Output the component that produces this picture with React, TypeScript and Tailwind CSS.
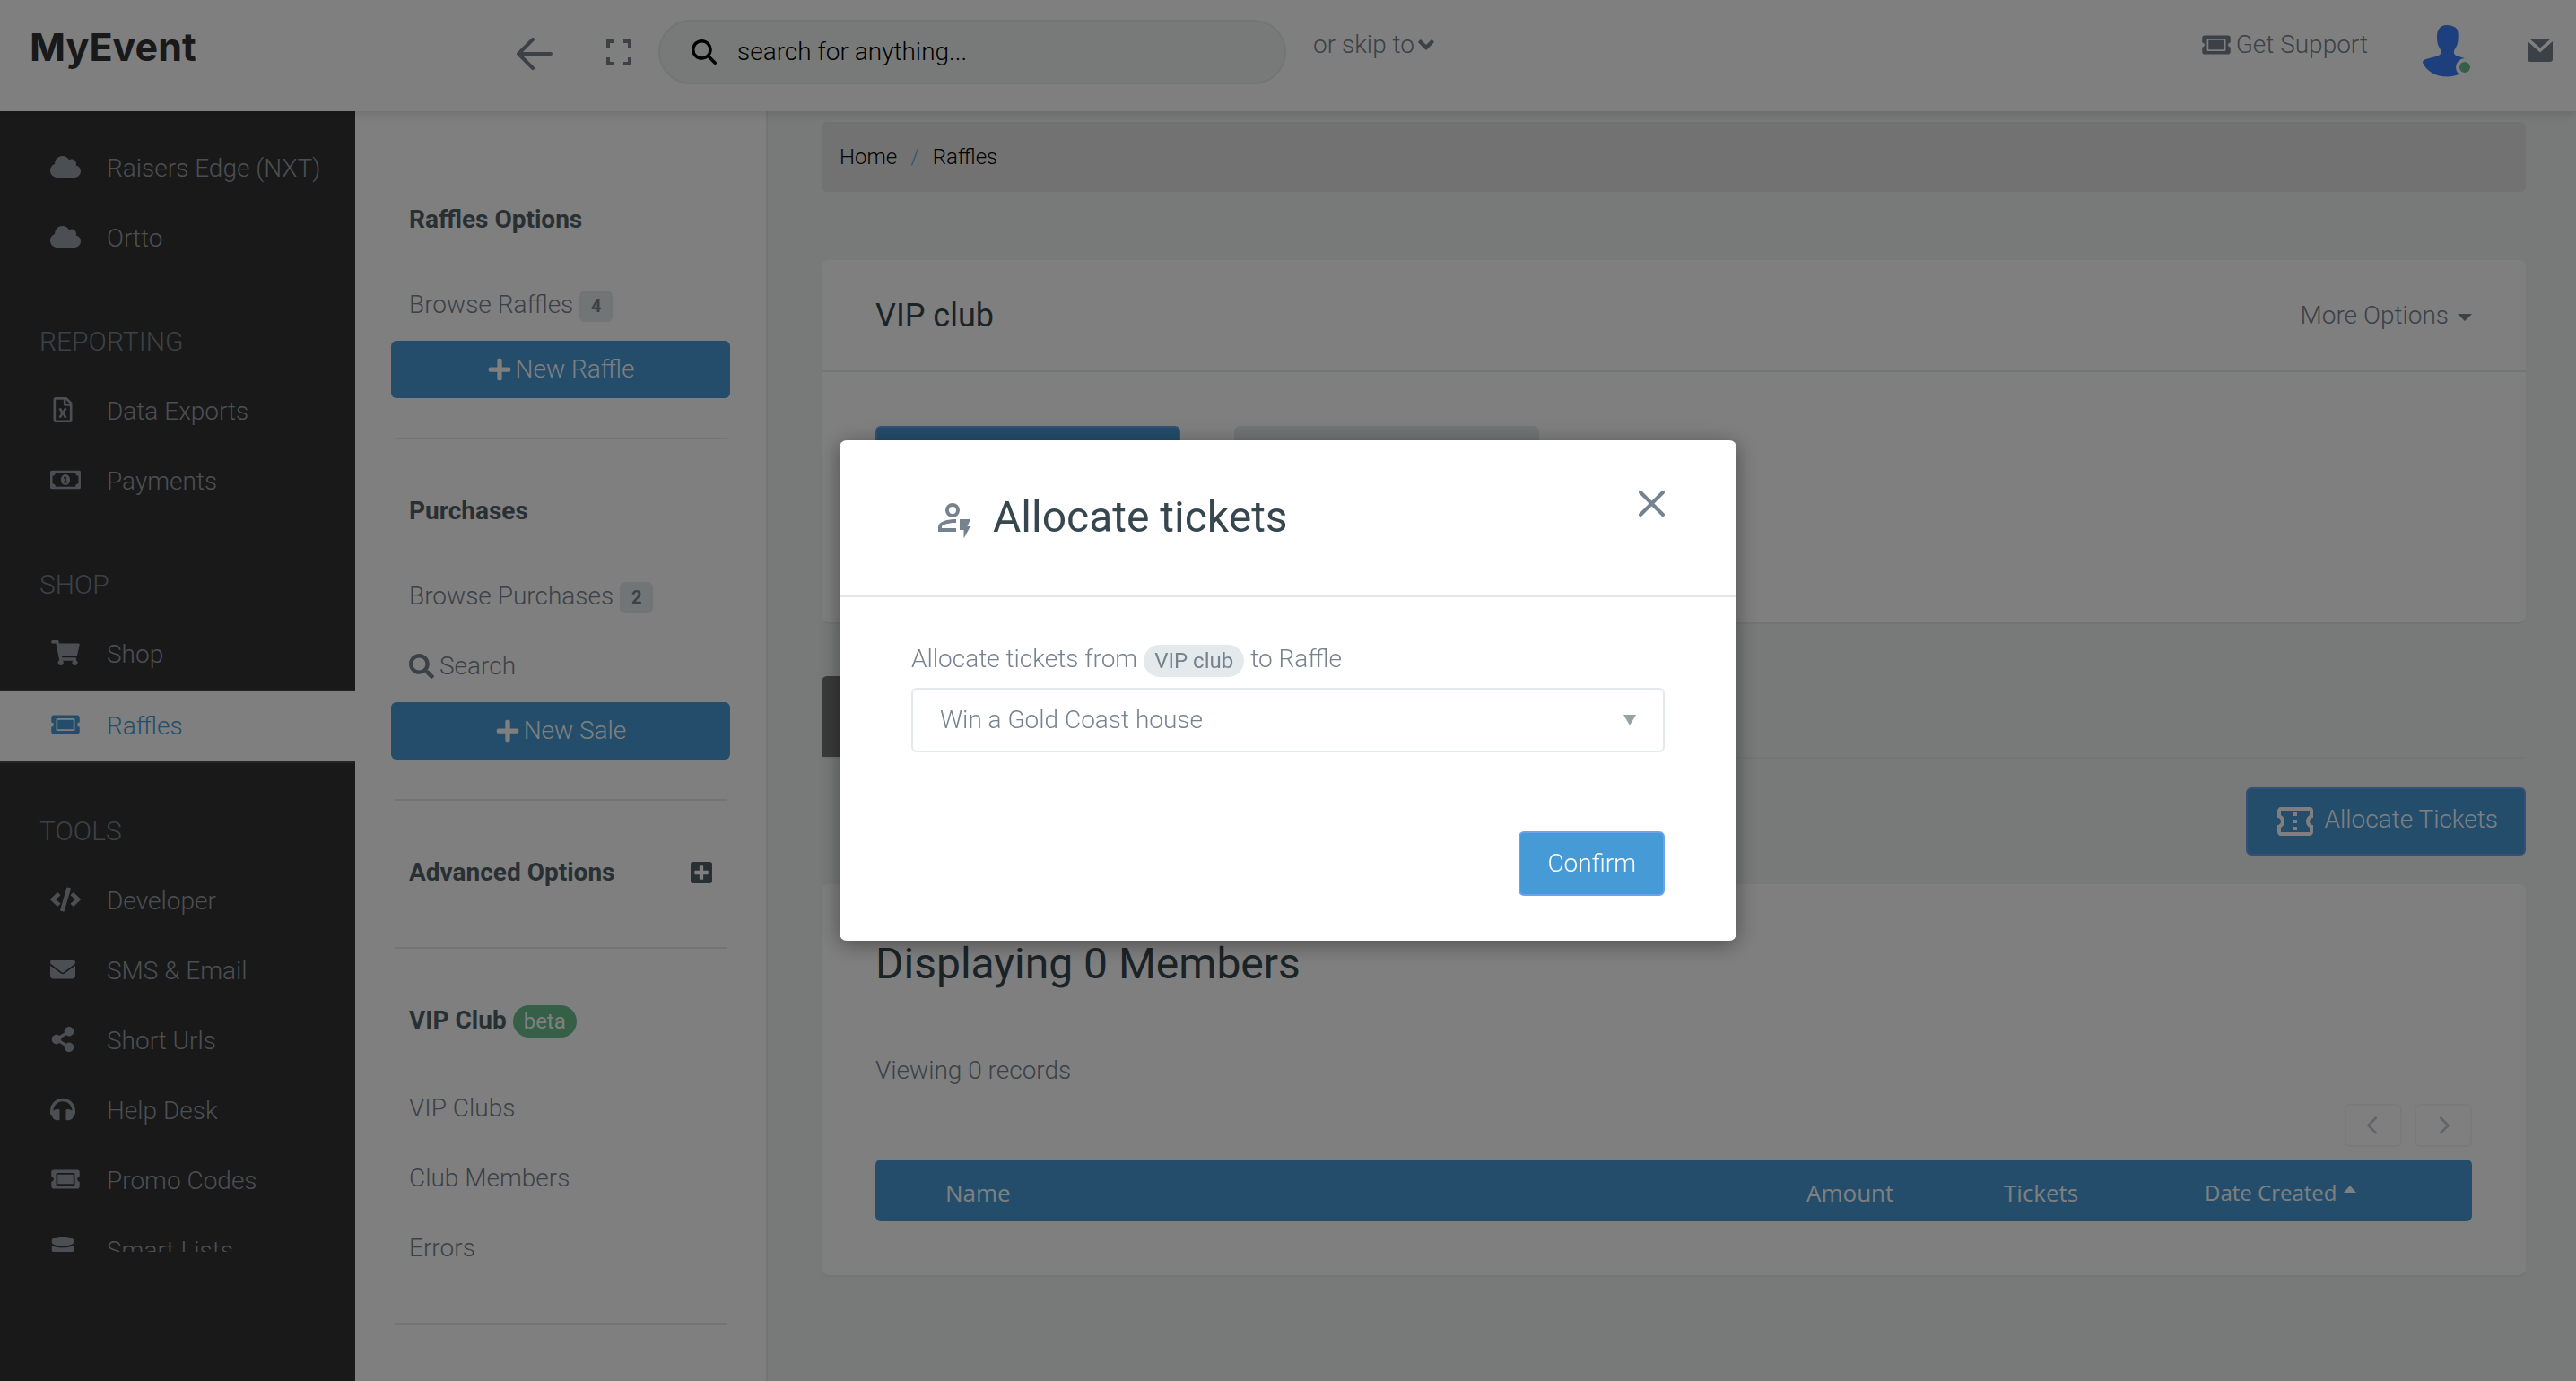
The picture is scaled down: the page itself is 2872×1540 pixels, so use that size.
import type { ReactNode } from "react";
import type { IconType } from "react-icons";
import {
  FaAngleDown,
  FaCloud,
  FaCode,
  FaDatabase,
  FaHeadphones,
  FaPlus,
  FaPlusSquare,
  FaRegFileExcel,
  FaRegMoneyBillAlt,
  FaSearch,
  FaShareAlt,
  FaShoppingCart,
  FaTicketAlt,
} from "react-icons/fa";
import { FaChevronLeft, FaChevronRight, FaEnvelope, FaMagnifyingGlass } from "react-icons/fa6";
import { MdOutlineConfirmationNumber } from "react-icons/md";

type NavItem = { label: string; icon: IconType; wide?: boolean; active?: boolean };
type NavGroup = { title?: string; items: NavItem[] };

const navGroups: NavGroup[] = [
  {
    items: [
      { label: "Raisers Edge (NXT)", icon: FaCloud, wide: true },
      { label: "Ortto", icon: FaCloud, wide: true },
    ],
  },
  {
    title: "REPORTING",
    items: [
      { label: "Data Exports", icon: FaRegFileExcel },
      { label: "Payments", icon: FaRegMoneyBillAlt, wide: true },
    ],
  },
  {
    title: "SHOP",
    items: [
      { label: "Shop", icon: FaShoppingCart, wide: true },
      { label: "Raffles", icon: FaTicketAlt, wide: true, active: true },
    ],
  },
  {
    title: "TOOLS",
    items: [
      { label: "Developer", icon: FaCode, wide: true },
      { label: "SMS & Email", icon: FaEnvelope },
      { label: "Short Urls", icon: FaShareAlt },
      { label: "Help Desk", icon: FaHeadphones },
      { label: "Promo Codes", icon: FaTicketAlt, wide: true },
      { label: "Smart Lists", icon: FaDatabase },
    ],
  },
];

function BackArrow() {
  return (
    <svg width="40" height="36" viewBox="0 0 40 36" fill="none" stroke="currentColor" strokeWidth="4" strokeLinecap="round" strokeLinejoin="round">
      <path d="M38 18H2M18 2L2 18L18 34" />
    </svg>
  );
}

function FullscreenIcon() {
  return (
    <svg width="28" height="29" viewBox="0 0 28 29" fill="none" stroke="currentColor" strokeWidth="4">
      <path d="M2 9V2H9M19 2H26V9M26 20V27H19M9 27H2V20" />
    </svg>
  );
}

function Avatar() {
  return (
    <svg width="60" height="60" viewBox="0 0 60 60" aria-hidden="true">
      <path
        d="M28 2C32 2 35 3 38 5C41 8 41 13 40.500 19C40 25 37 28 36 31C35.500 34 37 36 41 37L48 39C52 40 55 42 55 45C50 54 40 59.500 28 59.500C16 59.500 6 54 1 44C1 41 4 40 8 39L16 37C20 36 22 34 21.500 31C20 27 17 24 17 17C16.500 8 20 2 28 2Z"
        fill="#3b7ffa"
      />
      <circle cx="48" cy="49" r="10" fill="#ffffff" />
      <circle cx="48" cy="49" r="6" fill="#6bbf8c" />
    </svg>
  );
}

function MailIcon() {
  return (
    <svg width="28" height="26" viewBox="0 0 28 26" fill="currentColor">
      <path d="M2 0H26L14 10.500Z" />
      <path d="M0 3L14 15.500L28 3V23Q28 26 25 26H3Q0 26 0 23Z" />
    </svg>
  );
}

function UserBoltIcon() {
  return (
    <svg width="38" height="40" viewBox="0 0 38 40" fill="currentColor">
      <circle cx="17" cy="8" r="6" fill="none" stroke="currentColor" strokeWidth="4" />
      <path d="M1 32V26.500C1 20.500 12 18 21 18V22C14 22 5 24 5 26.500V28H21V32Z" />
      <path d="M25 18H37L33.500 26H37L29.500 39.500V30H25Z" />
    </svg>
  );
}

function CloseIcon() {
  return (
    <svg width="29" height="29" viewBox="0 0 29 29" fill="none" stroke="currentColor" strokeWidth="4" strokeLinecap="round">
      <path d="M2 2L27 27M27 2L2 27" />
    </svg>
  );
}

function Header() {
  return (
    <header className="relative z-10 h-[124px] bg-white pb-2 shadow-[0_4px_10px_rgba(0,0,0,0.12)]">
      <div className="flex h-full items-center">
        <a href="#" className="w-[576px] pb-3 pl-[33px] font-['Inter',sans-serif] text-[43px] leading-[48px] font-bold text-[#333333]">
          MyEvent
        </a>
        <button type="button" aria-label="Back" className="pt-1">
          <BackArrow />
        </button>
        <button type="button" aria-label="Full screen" className="ml-[60px]">
          <FullscreenIcon />
        </button>
        <label className="ml-[30px] flex h-[72px] w-[700px] items-center rounded-full border-2 border-[#e4eaec] bg-[#f1f4f3] pl-[35px] text-black">
          <FaMagnifyingGlass size={28} />
          <input
            type="text"
            aria-label="Search"
            placeholder="search for anything..."
            className="ml-[23px] min-w-0 flex-1 bg-transparent outline-none placeholder:text-black placeholder:opacity-100"
          />
        </label>
        <button type="button" className="ml-[30px] flex items-center gap-1 pb-4">
          or skip to <FaAngleDown className="h-7 w-[18px]" />
        </button>
        <a href="#" className="ml-auto flex items-center gap-1.5 pb-4">
          <FaTicketAlt className="h-7 w-8" />
          Get Support
        </a>
        <button type="button" aria-label="Account" className="ml-[60px] pb-1">
          <Avatar />
        </button>
        <button type="button" aria-label="Messages" className="mr-[26px] ml-[58px] pb-1">
          <MailIcon />
        </button>
      </div>
    </header>
  );
}

function Sidebar() {
  return (
    <aside className="flex w-[396px] shrink-0 flex-col bg-[#333333] pb-36 text-[#979fa6]">
      <nav className="min-h-0 flex-1 overflow-hidden pt-[25px]">
        {navGroups.map((group, i) => (
          <section key={i} className="mb-[37px]">
            {group.title && (
              <h3 className="pl-11 text-[30px] leading-[78px] text-[#76838f]">{group.title}</h3>
            )}
            <ul>
              {group.items.map(({ label, icon: Icon, wide, active }) => (
                <li key={label}>
                  <a
                    href="#"
                    className={
                      active
                        ? "flex h-[82px] items-center border-y-2 border-[#4a4a4a] bg-white pl-14 text-[#469bd6]"
                        : "flex h-[78px] items-center pl-14"
                    }
                  >
                    <span className="w-[63px] pb-[5px]">
                      <Icon className={wide ? "h-7 w-[34px]" : "h-7 w-7"} />
                    </span>
                    {label}
                  </a>
                </li>
              ))}
            </ul>
          </section>
        ))}
      </nav>
    </aside>
  );
}

function PanelHeading({ children }: { children: ReactNode }) {
  return <h2 className="flex h-[78px] items-center px-5 font-bold text-[#526069]">{children}</h2>;
}

function PanelLink({ children }: { children: ReactNode }) {
  return (
    <a href="#" className="flex h-[78px] items-center px-5">
      {children}
    </a>
  );
}

function CountBadge({ value }: { value: number }) {
  return (
    <span className="mt-0.5 ml-[7px] flex h-[35px] w-[37px] items-center justify-center rounded-md bg-[#e4eaec] text-[20px] font-bold text-[#76838f]">
      {value}
    </span>
  );
}

function PanelButton({ children }: { children: ReactNode }) {
  return (
    <button type="button" className="my-px flex h-16 w-full items-center justify-center gap-1 rounded-md bg-[#469bd6] text-white">
      <FaPlus size={28} />
      {children}
    </button>
  );
}

function PanelRule() {
  return <hr className="mx-1 mt-11 mb-[41px] border-0 border-t-2 border-[#e4eaec]" />;
}

function OptionsPanel() {
  return (
    <aside className="w-[460px] shrink-0 overflow-hidden border-r-2 border-[#e4eaec] bg-white pt-[82px] pr-10 pl-10">
      <PanelHeading>Raffles Options</PanelHeading>
      <div className="mt-[17px]">
        <PanelLink>
          Browse Raffles <CountBadge value={4} />
        </PanelLink>
        <PanelButton>New Raffle</PanelButton>
      </div>
      <PanelRule />
      <PanelHeading>Purchases</PanelHeading>
      <div className="mt-[17px]">
        <PanelLink>
          Browse Purchases <CountBadge value={2} />
        </PanelLink>
        <PanelLink>
          <FaSearch size={28} className="mr-1.5" />
          Search
        </PanelLink>
        <PanelButton>New Sale</PanelButton>
      </div>
      <PanelRule />
      <PanelHeading>
        Advanced Options
        <button type="button" aria-label="Expand advanced options" className="ml-auto">
          <FaPlusSquare className="h-7 w-6" />
        </button>
      </PanelHeading>
      <PanelRule />
      <PanelHeading>
        VIP Club
        <span className="mt-0.5 ml-[7px] rounded-full bg-[#6bbf8c] px-3 text-[24px] leading-9 font-normal text-white">beta</span>
      </PanelHeading>
      <div className="mt-5">
        <PanelLink>VIP Clubs</PanelLink>
        <PanelLink>Club Members</PanelLink>
        <PanelLink>Errors</PanelLink>
      </div>
      <PanelRule />
    </aside>
  );
}

function MembersTable() {
  return (
    <table className="mt-[14px] w-full table-fixed overflow-hidden rounded-md bg-[#469bd6] font-['Open_Sans',sans-serif] text-[26px] text-white">
      <thead>
        <tr className="h-[69px] text-left">
          <th scope="col" className="pt-1 pl-[78px] font-normal">
            Name
          </th>
          <th scope="col" className="w-[220px] pt-1 font-normal">
            Amount
          </th>
          <th scope="col" className="w-[224px] pt-1 font-normal">
            Tickets
          </th>
          <th scope="col" aria-sort="ascending" className="w-[298px] pt-1 font-normal">
            <button type="button" className="flex items-center gap-2 text-[24px]">
              Date Created
              <svg width="14" height="8" viewBox="0 0 14 8" fill="currentColor" className="mb-2">
                <path d="M7 0L14 8H0Z" />
              </svg>
            </button>
          </th>
        </tr>
      </thead>
    </table>
  );
}

function Main() {
  return (
    <main className="min-w-0 flex-1 overflow-hidden bg-[#f1f4f3] pt-3 pr-14 pl-[60px]">
      <nav aria-label="Breadcrumb" className="flex h-[78px] items-center gap-[15px] rounded-md bg-[#e4e4e4] pl-5 text-[24px] text-black">
        <a href="#">Home</a>
        <span className="text-[#62a8ea]">/</span>
        <a href="#">Raffles</a>
      </nav>

      <section className="mt-[76px] rounded-lg bg-white shadow-[0_2px_2px_rgba(0,0,0,0.05)]">
        <div className="flex h-[125px] items-center justify-between border-b-2 border-[#e4eaec] px-[60px]">
          <h1 className="text-[36px] font-normal text-[#37474f]">VIP club</h1>
          <button type="button" className="flex items-center gap-2.5">
            More Options
            <svg width="16" height="8" viewBox="0 0 16 8" fill="currentColor" className="mt-1">
              <path d="M0 0H16L8 8Z" />
            </svg>
          </button>
        </div>
        <div className="flex gap-[60px] px-[60px] pt-[60px] pb-[147px]">
          <button type="button" aria-label="Members" className="h-[72px] w-[340px] rounded-md border-2 border-[#6f9ff0] bg-[#469bd6]" />
          <button type="button" aria-label="Settings" className="h-[72px] w-[340px] rounded-md bg-[#e4eaec]" />
        </div>
      </section>

      <div role="tablist" className="mt-[60px] flex h-[92px] border-b-2 border-[#e8ebec]">
        <button type="button" role="tab" aria-selected="true" aria-label="Members" className="w-[240px] rounded-t-md bg-[#757575]" />
      </div>

      <div className="mt-8 flex justify-end">
        <button type="button" className="flex h-[76px] items-center gap-2 rounded-md border-2 border-[#6f9ff0] bg-[#469bd6] px-[29px] text-white">
          <MdOutlineConfirmationNumber size={48} />
          <span className="pb-[5px]">Allocate Tickets</span>
        </button>
      </div>

      <section className="mt-8 rounded-lg bg-white px-[60px] pt-[57px] pb-[60px] shadow-[0_2px_2px_rgba(0,0,0,0.05)]">
        <h2 className="text-[48px] leading-[64px] font-normal text-[#37474f]">Displaying 0 Members</h2>
        <p className="mt-[67px] leading-10">Viewing 0 records</p>
        <div className="mt-[17px] flex justify-end gap-[14px] text-[#c4cbd2]">
          <button type="button" aria-label="Previous page" disabled className="flex h-12 w-16 items-center justify-center rounded-md border-2 border-[#f3f5f6]">
            <FaChevronLeft size={22} />
          </button>
          <button type="button" aria-label="Next page" disabled className="flex h-12 w-16 items-center justify-center rounded-md border-2 border-[#f3f5f6]">
            <FaChevronRight size={22} />
          </button>
        </div>
        <MembersTable />
      </section>
    </main>
  );
}

function AllocateDialog() {
  return (
    <div className="fixed inset-0 z-20 flex items-center justify-center bg-black/50">
      <div role="dialog" aria-modal="true" aria-labelledby="allocate-title" className="w-[1000px] rounded-lg bg-white shadow-[0_4px_24px_rgba(0,0,0,0.4)]">
        <div className="flex h-[175px] items-center border-b-3 border-[#e5e5e5] pr-20 pl-[109px]">
          <span className="pt-2">
            <UserBoltIcon />
          </span>
          <h2 id="allocate-title" className="ml-6 text-[48px] font-normal text-[#37474f]">
            Allocate tickets
          </h2>
          <button type="button" aria-label="Close" className="mt-14 ml-auto self-start">
            <CloseIcon />
          </button>
        </div>
        <form className="px-20 pt-[49px] pb-[50px]" onSubmit={(e) => e.preventDefault()}>
          <label htmlFor="raffle" className="flex h-10 items-center gap-[7px]">
            Allocate tickets from
            <span className="mt-1 rounded-full bg-[#e4eaec] px-3 text-[24px] leading-9 font-normal">VIP club</span>
            to Raffle
          </label>
          <div className="relative mt-3">
            <select id="raffle" className="h-[72px] w-full appearance-none rounded-md border-2 border-[#e4eaec] bg-white pl-[30px]">
              <option>Win a Gold Coast house</option>
            </select>
            <svg width="14" height="12" viewBox="0 0 14 12" className="pointer-events-none absolute top-[30px] right-8" fill="#98a1a6">
              <path d="M0 0H14L7 12Z" />
            </svg>
          </div>
          <div className="mt-[88px] flex justify-end">
            <button type="submit" className="h-[72px] rounded-md border-2 border-[#6f9ff0] bg-[#469bd6] px-[30px] text-white">
              Confirm
            </button>
          </div>
        </form>
      </div>
    </div>
  );
}

export default function App() {
  return (
    <div className="flex h-screen flex-col font-['Roboto',sans-serif] text-[28px] leading-[40px] font-light text-[#76838f]">
      <Header />
      <div className="flex min-h-0 flex-1">
        <Sidebar />
        <OptionsPanel />
        <Main />
      </div>
      <AllocateDialog />
    </div>
  );
}
